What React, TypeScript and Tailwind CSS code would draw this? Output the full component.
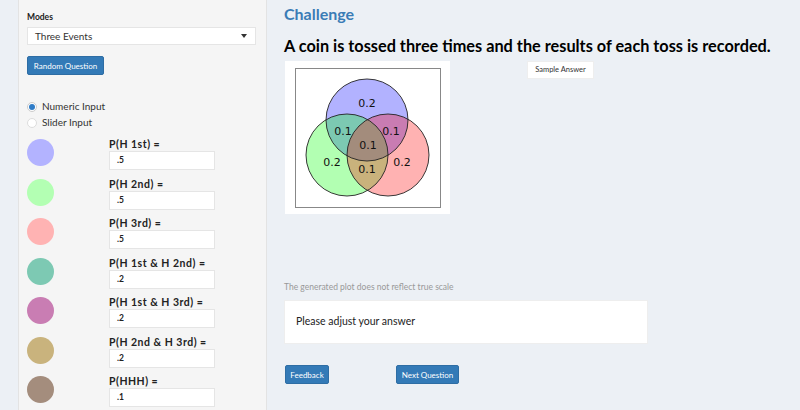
import React from 'react';

const FONT = { fontFamily: 'Lato, "Open Sans", sans-serif' };

const PROBS = [
  { label: 'P(H 1st) =', value: '.5', color: 'bg-[#b3b3ff]' },
  { label: 'P(H 2nd) =', value: '.5', color: 'bg-[#b3ffb3]' },
  { label: 'P(H 3rd) =', value: '.5', color: 'bg-[#ffb3b3]' },
  { label: 'P(H 1st & H 2nd) =', value: '.2', color: 'bg-[#7dc9b3]' },
  { label: 'P(H 1st & H 3rd) =', value: '.2', color: 'bg-[#c97db3]' },
  { label: 'P(H 2nd & H 3rd) =', value: '.2', color: 'bg-[#c9b37d]' },
  { label: 'P(HHH) =', value: '.1', color: 'bg-[#a48d7d]' },
];

const Venn: React.FC = () => (
  <svg width="165" height="153" viewBox="0 0 165 153" className="block">
    <rect x="0" y="0" width="165" height="153" fill="#fff" />
    <rect x="10.5" y="7.5" width="145" height="139" fill="none" stroke="#888" strokeWidth="1" />
    <circle cx="82" cy="59" r="41" fill="#0000ff" fillOpacity="0.3" />
    <circle cx="62" cy="94" r="41" fill="#00ff00" fillOpacity="0.3" />
    <circle cx="103" cy="94" r="41" fill="#ff0000" fillOpacity="0.3" />
    <circle cx="82" cy="59" r="41" fill="none" stroke="#222" strokeWidth="0.9" />
    <circle cx="62" cy="94" r="41" fill="none" stroke="#222" strokeWidth="0.9" />
    <circle cx="103" cy="94" r="41" fill="none" stroke="#222" strokeWidth="0.9" />
    <g fontSize="11" fill="#111" textAnchor="middle" dominantBaseline="central" style={{ fontFamily: '"DejaVu Sans", sans-serif' }}>
      <text x="82" y="42">0.2</text>
      <text x="58" y="70">0.1</text>
      <text x="106" y="70">0.1</text>
      <text x="83" y="84">0.1</text>
      <text x="47" y="101">0.2</text>
      <text x="117" y="101">0.2</text>
      <text x="82" y="108">0.1</text>
    </g>
  </svg>
);

const App: React.FC = () => {
  return (
    <div className="w-[800px] h-[410px] overflow-hidden bg-[#ecf0f5] flex" style={FONT}>
      <aside className="shrink-0 ml-[18px] w-[249px] h-[410px] bg-[#f5f5f5] border-x border-[#e3e3e3] pl-[8px] pt-[12px]">
        <div className="text-[8.5px] font-bold text-[#222] leading-[11px]">Modes</div>
        <div className="mt-[4px] w-[229px] h-[18px] bg-white border border-[#e5e5e5] flex items-center justify-between pl-[7px] pr-[8px]">
          <span className="text-[10px] text-[#333]">Three Events</span>
          <span className="w-0 h-0 border-x-[3.5px] border-x-transparent border-t-[4px] border-t-[#333]" />
        </div>
        <button className="mt-[11px] w-[77px] h-[19px] bg-[#337ab7] border border-[#2e6da4] rounded-[2px] text-white text-[8px] flex items-center justify-center">
          Random Question
        </button>
        <div className="mt-[26px] flex flex-col gap-[5px]">
          <label className="flex items-center h-[11px] text-[10px] text-[#333]">
            <span className="w-[10px] h-[10px] rounded-full bg-white border border-[#ccc] flex items-center justify-center mr-[5px]">
              <span className="w-[6px] h-[6px] rounded-full bg-[#2f7cc7]" />
            </span>
            Numeric Input
          </label>
          <label className="flex items-center h-[11px] text-[10px] text-[#333]">
            <span className="w-[10px] h-[10px] rounded-full bg-white border border-[#ddd] mr-[5px]" />
            Slider Input
          </label>
        </div>
        <div className="mt-[10px] flex flex-col">
          {PROBS.map((p) => (
            <div key={p.label} className="h-[39.5px] flex items-start">
              <div className={`w-[27px] h-[27px] rounded-full mt-[1px] ${p.color}`} />
              <div className="ml-[55px] flex flex-col">
                <span className="text-[10.5px] font-bold text-[#222] leading-[13px] tracking-[0.5px]">{p.label}</span>
                <div className="mt-[0px] w-[106px] h-[19px] bg-white border border-[#e5e5e5] flex items-center pl-[7px] text-[8.5px] font-bold text-[#222]">
                  {p.value}
                </div>
              </div>
            </div>
          ))}
        </div>
      </aside>
      <main className="flex-1 pl-[17px] pt-[3px]">
        <h2 className="text-[16px] font-bold text-[#3a7cb6] leading-[22px]">Challenge</h2>
        <h1 className="mt-[10px] text-[16.3px] font-bold text-black leading-[22px] whitespace-nowrap">
          A coin is tossed three times and the results of each toss is recorded.
        </h1>
        <div className="mt-[4px] flex items-start">
          <div className="ml-[1px]">
            <Venn />
          </div>
          <button className="ml-[77px] w-[67px] h-[18px] bg-white border border-[#eee] text-[7.5px] text-[#333] flex items-center justify-center">
            Sample Answer
          </button>
        </div>
        <p className="mt-[67px] text-[8.5px] text-[#999] leading-[12px]">The generated plot does not reflect true scale</p>
        <div className="mt-[7px] w-[364px] h-[44px] bg-white border border-[#eee] flex items-center pl-[11px] text-[10.5px] text-[#222]">
          Please adjust your answer
        </div>
        <div className="mt-[21px] flex">
          <button className="ml-[1px] w-[44px] h-[19px] bg-[#337ab7] border border-[#2e6da4] rounded-[2px] text-white text-[8px] flex items-center justify-center">
            Feedback
          </button>
          <button className="ml-[67px] w-[63px] h-[19px] bg-[#337ab7] border border-[#2e6da4] rounded-[2px] text-white text-[8px] flex items-center justify-center">
            Next Question
          </button>
        </div>
      </main>
    </div>
  );
};

export default App;
